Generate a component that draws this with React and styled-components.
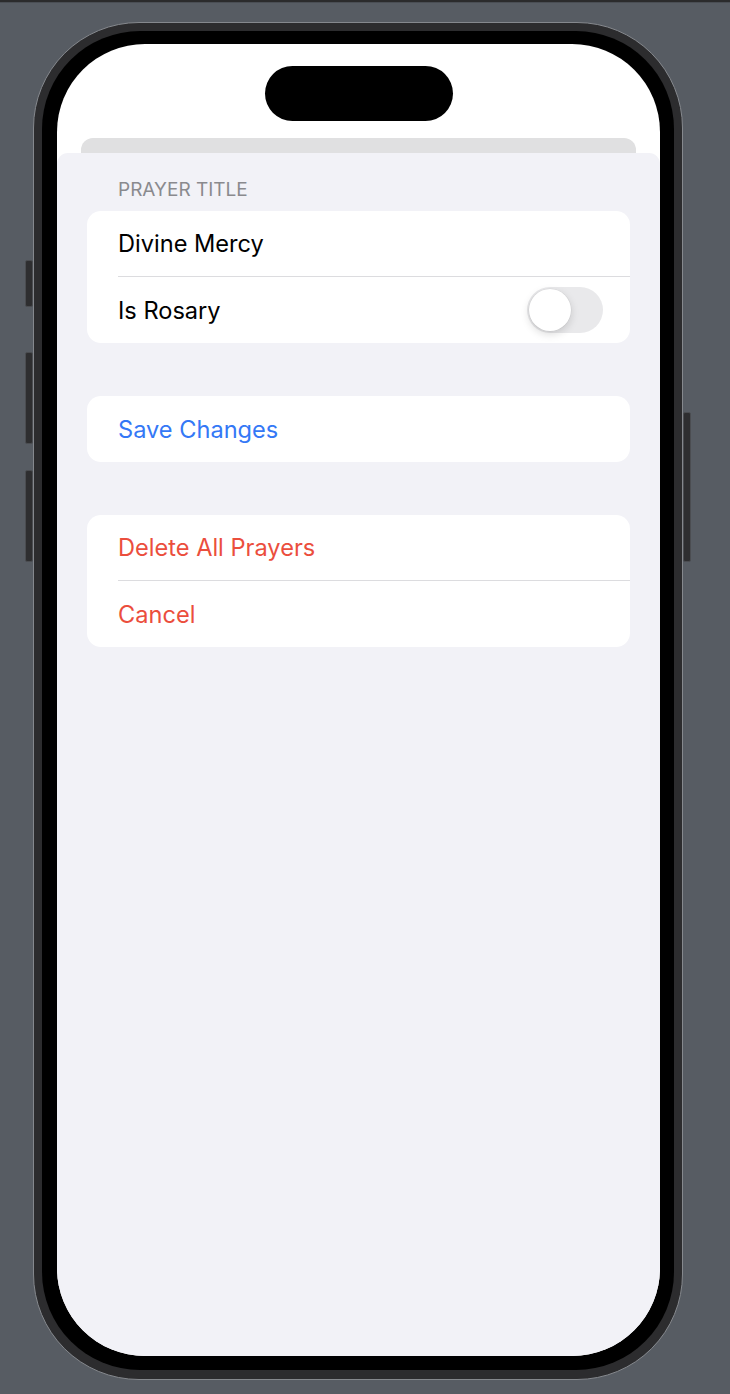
import React from "react";
import styled, { createGlobalStyle } from "styled-components";

const GlobalStyle = createGlobalStyle`
  html, body {
    margin: 0;
    padding: 0;
    background: #575c63;
  }
  body {
    font-family: Inter, "Noto Sans", "Liberation Sans", sans-serif;
    -webkit-font-smoothing: antialiased;
  }
  * {
    box-sizing: border-box;
  }
`;

const TopStrip = styled.div`
  height: 3px;
  background: #2b2b2c;
  border-bottom: 1px solid #4a4e54;
`;

const Stage = styled.div`
  width: 730px;
  height: 1390px;
  padding: 19px 0 0 33px;
`;

const Phone = styled.div`
  position: relative;
  display: flex;
  width: 650px;
  height: 1358px;
  padding: 8px 8px 9px 8px;
  border: 1px solid #85888d;
  border-radius: 106px;
  background: #2c2c2e;
`;

const SideButton = styled.div`
  position: absolute;
  top: ${props => props.$top}px;
  ${props => (props.$right ? "right: -9px;" : "left: -9px;")}
  width: 8px;
  height: ${props => props.$height}px;
  background: #2e2e30;
  border: 1px solid #4b4d51;
  border-radius: 2px;
`;

const Bezel = styled.div`
  display: flex;
  flex: 1;
  padding: 13px 14px 14px 15px;
  border-radius: 98px;
  background: #000;
`;

const Screen = styled.div`
  display: flex;
  flex-direction: column;
  flex: 1;
  overflow: hidden;
  border-radius: 88px;
  background: #fff;
`;

const StatusArea = styled.div`
  display: flex;
  justify-content: center;
  height: 94px;
  padding-top: 22px;
`;

const Island = styled.div`
  width: 188px;
  height: 55px;
  border-radius: 28px;
  background: #000;
`;

const BehindCard = styled.div`
  height: 15px;
  margin: 0 24px;
  border-radius: 12px 12px 0 0;
  background: #e0e0e1;
`;

const Sheet = styled.div`
  flex: 1;
  padding: 25px 30px 0;
  border-radius: 11px 11px 0 0;
  background: #f2f2f7;
`;

const SectionHeader = styled.div`
  padding-left: 31px;
  margin-bottom: 9px;
  font-size: 19px;
  line-height: 24px;
  color: #8a8a8e;
  text-transform: uppercase;
`;

const Card = styled.div`
  margin-bottom: ${props => props.$gap || 0}px;
  border-radius: 14px;
  background: #fff;
  overflow: hidden;
`;

const Row = styled.div`
  display: flex;
  align-items: center;
  justify-content: space-between;
  height: ${props => props.$height || 65}px;
  padding: 0 27px 0 31px;
  font-size: 23.6px;
  color: ${props =>
    props.$tone === "blue" ? "#3478f6" : props.$tone === "red" ? "#eb4e3d" : "#000"};
`;

const Divider = styled.div`
  height: 1px;
  margin-left: 31px;
  background: #dcdcdf;
`;

const Track = styled.div`
  display: flex;
  align-items: center;
  width: 76px;
  height: 46px;
  padding: 2px;
  border-radius: 23px;
  background: #e9e9eb;
`;

const Knob = styled.div`
  width: 42px;
  height: 42px;
  border-radius: 50%;
  background: #fff;
  box-shadow: 0 3px 8px rgba(0, 0, 0, 0.15), 0 0 0 0.5px rgba(0, 0, 0, 0.06);
`;

function Toggle() {
  return (
    <Track>
      <Knob />
    </Track>
  );
}

export default function App() {
  return (
    <>
      <GlobalStyle />
      <TopStrip />
      <Stage>
        <Phone>
          <SideButton $top={237} $height={47} />
          <SideButton $top={329} $height={92} />
          <SideButton $top={447} $height={92} />
          <SideButton $right $top={389} $height={150} />
          <Bezel>
            <Screen>
              <StatusArea>
                <Island />
              </StatusArea>
              <BehindCard />
              <Sheet>
                <SectionHeader>Prayer Title</SectionHeader>
                <Card $gap={53}>
                  <Row>Divine Mercy</Row>
                  <Divider />
                  <Row $height={66}>
                    Is Rosary
                    <Toggle />
                  </Row>
                </Card>
                <Card $gap={53}>
                  <Row $tone="blue" $height={66}>Save Changes</Row>
                </Card>
                <Card>
                  <Row $tone="red">Delete All Prayers</Row>
                  <Divider />
                  <Row $tone="red" $height={66}>Cancel</Row>
                </Card>
              </Sheet>
            </Screen>
          </Bezel>
        </Phone>
      </Stage>
    </>
  );
}
